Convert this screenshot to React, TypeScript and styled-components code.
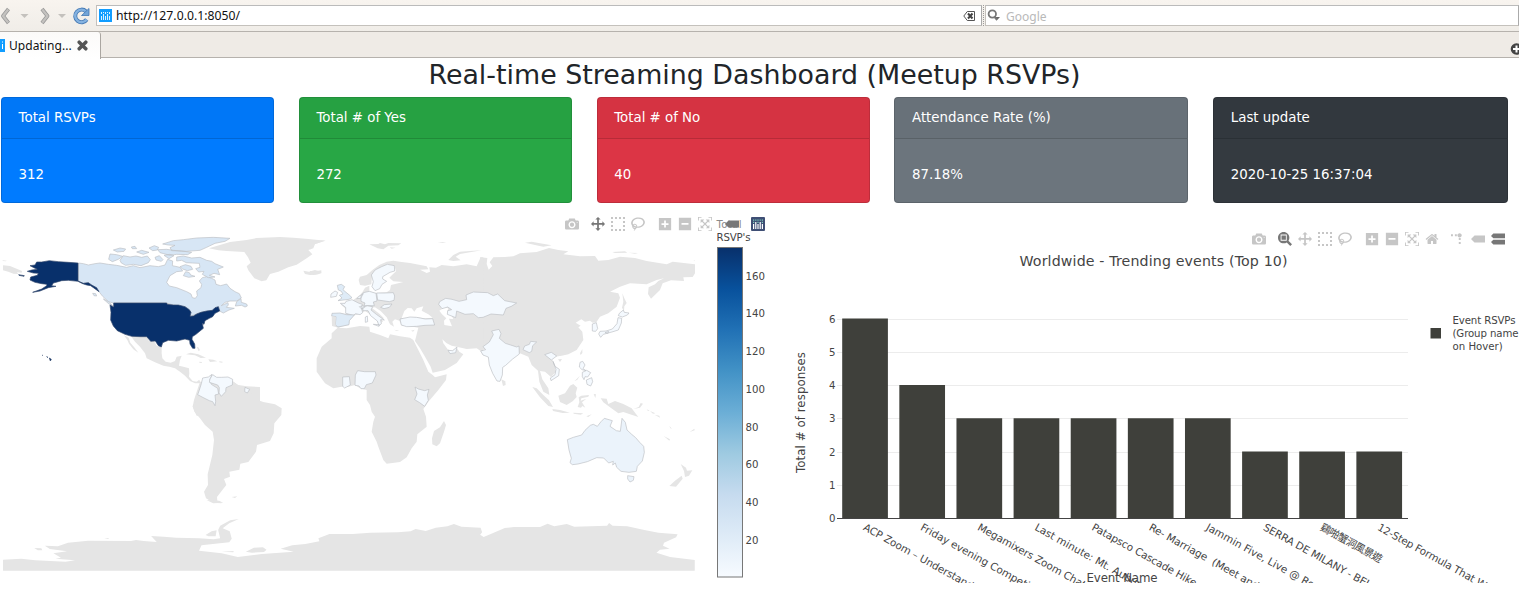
import React from "react";
import styled, { createGlobalStyle } from "styled-components";

const GlobalStyle = createGlobalStyle`
  * { box-sizing: border-box; }
  body { margin: 0; background: #fff; overflow: hidden; font-family: "DejaVu Sans", "Noto Sans CJK TC", sans-serif; }
`;

const Page = styled.div`
  width: 1525px;
  height: 595px;
  overflow: hidden;
  display: flex;
  flex-direction: column;
`;

/* ---------- browser chrome ---------- */
const Chrome = styled.div`
  width: 1519px;
  font-family: "Noto Sans", sans-serif;
  font-size: 12px;
  color: #111;
`;
const NavBar = styled.div`
  height: 32px;
  padding-top: 5px;
  display: flex;
  background: linear-gradient(#f8f4ef, #f0ede8);
  border-bottom: 1px solid #b6b2ad;
`;
const NavIcons = styled.svg`
  width: 96px;
  height: 22px;
  flex: none;
`;
const Field = styled.div<{ $w: number }>`
  width: ${(p) => p.$w}px;
  height: 21px;
  flex: none;
  display: flex;
  align-items: center;
  background: #fff;
  border: 1px solid #c4c1bc;
  border-right-color: #aaa;
  border-top-color: #bbb;
`;
const Url = styled.span`
  margin-left: 4px;
  flex: 1;
  font-size: 12.2px;
  line-height: 20px;
  padding-top: 1px;
  letter-spacing: 0.03px;
`;
const Grip = styled.div`
  width: 2px;
  height: 21px;
  border-left: 1px dotted #999;
  margin-left: 1px;
`;
const Placeholder = styled.span`
  color: #b9b9b9;
  margin-left: 4px;
  padding-top: 1px;
`;
const TabBar = styled.div`
  height: 26px;
  display: flex;
  justify-content: space-between;
  background: #efebe6;
  border-bottom: 1px solid #b6b2ad;
`;
const Tab = styled.div`
  width: 101px;
  height: 27px;
  display: flex;
  align-items: center;
  background: linear-gradient(#fbfaf9, #fff);
  border-right: 1px solid #aaa6a1;
  border-radius: 0 3px 0 0;
`;
const TabLabel = styled.span`
  margin: 0 5px 0 3px;
  font-size: 12px;
  letter-spacing: 0.05px;
`;
const NewTab = styled.svg`
  width: 9px;
  height: 12px;
  margin-top: 11px;
`;

/* ---------- dashboard ---------- */
const Title = styled.h1`
  margin: 0;
  width: 1509px;
  height: 39px;
  line-height: 34px;
  text-align: center;
  font-size: 26.85px;
  font-weight: 400;
  color: #212529;
  white-space: nowrap;
`;
const Cards = styled.div`
  display: grid;
  grid-template-columns: 273px 273px 273px 294px 295px;
  grid-template-rows: 106px;
  column-gap: 24.8px;
  padding-left: 1px;
  height: 106px;
  flex: none;
`;
const Card = styled.section<{ $bg: string }>`
  background: ${(p) => p.$bg};
  border: 1px solid rgba(0, 0, 0, 0.14);
  border-radius: 4px;
  color: #fff;
  font-size: 13.35px;
`;
const CardHead = styled.header`
  height: 41px;
  padding: 0 16.6px;
  line-height: 39px;
  background: rgba(0, 0, 0, 0.03);
  border-bottom: 1px solid rgba(0, 0, 0, 0.14);
`;
const CardBody = styled.div`
  padding: 0 16.6px;
  height: 63px;
  line-height: 72px;
`;
const Charts = styled.div`
  display: flex;
  height: 392px;
  flex: none;
`;
const Panel = styled.div<{ $w: number }>`
  width: ${(p) => p.$w}px;
  height: 392px;
  position: relative;
  flex: none;
`;
const Plot = styled.svg`
  display: block;
  font-family: "DejaVu Sans", "Noto Sans CJK TC", sans-serif;
`;
const ModeBar = styled.div<{ $left: number; $top: number }>`
  position: absolute;
  left: ${(p) => p.$left}px;
  top: ${(p) => p.$top}px;
  display: flex;
`;
const Tool = styled.svg<{ $on?: boolean; $gap?: number }>`
  width: 14px;
  height: 14px;
  margin-right: ${(p) => p.$gap ?? 6}px;
  fill: ${(p) => (p.$on ? "#777" : "#c6c6c6")};
`;

type IconDef = { w: number; d: string; k?: number };
const icons: Record<string, IconDef> = {
  camera: { w: 1000, d: "m500 450c-83 0-150-67-150-150 0-83 67-150 150-150 83 0 150 67 150 150 0 83-67 150-150 150z m400 150h-120c-16 0-34 13-39 29l-31 93c-6 15-23 28-40 28h-340c-16 0-34-13-39-28l-31-94c-6-15-23-28-40-28h-120c-55 0-100-45-100-100v-450c0-55 45-100 100-100h800c55 0 100 45 100 100v450c0 55-45 100-100 100z m-400-550c-138 0-250 112-250 250 0 138 112 250 250 250 138 0 250-112 250-250 0-138-112-250-250-250z m365 380c-19 0-35 16-35 35 0 19 16 35 35 35 19 0 35-16 35-35 0-19-16-35-35-35z" },
  zoom: { w: 1000, d: "m1000-25l-250 251c40 63 63 138 63 218 0 224-182 406-407 406-224 0-406-182-406-406s183-406 407-406c80 0 155 22 218 62l250-250 125 125z m-812 250l0 438 437 0 0-438-437 0z m62 375l313 0 0-312-313 0 0 312z" },
  pan: { w: 1000, d: "m1000 350l-187 188 0-125-250 0 0 250 125 0-188 187-187-187 125 0 0-250-250 0 0 125-188-188 186-187 0 125 252 0 0-250-125 0 187-188 188 188-125 0 0 250 250 0 0-126 187 188z" },
  select: { w: 1000, d: "m0 850l0-143 143 0 0 143-143 0z m286 0l0-143 143 0 0 143-143 0z m285 0l0-143 143 0 0 143-143 0z m286 0l0-143 143 0 0 143-143 0z m-857-286l0-143 143 0 0 143-143 0z m857 0l0-143 143 0 0 143-143 0z m-857-285l0-143 143 0 0 143-143 0z m857 0l0-143 143 0 0 143-143 0z m-857-286l0-143 143 0 0 143-143 0z m286 0l0-143 143 0 0 143-143 0z m285 0l0-143 143 0 0 143-143 0z m286 0l0-143 143 0 0 143-143 0z" },
  lasso: { w: 1031, d: "m1018 538c-36 207-290 336-568 286-277-48-473-256-436-463 10-57 36-108 76-151-13-66 11-137 68-183 34-28 75-41 114-42l-55-70 0 0c-2-1-3-2-4-3-10-14-8-34 5-45 14-11 34-8 45 4 1 1 2 3 2 5l0 0 113 140c16 11 31 24 45 40 4 3 6 7 8 11 48-3 100 0 151 9 278 48 473 255 436 462z m-624-379c-80 14-149 48-197 96 42 42 109 47 156 9 33-26 47-66 41-105z m-187-74c-19 16-33 37-39 60 50-32 109-55 174-68-42-25-95-24-135 8z m360 75c-34-7-69-9-102-8 8 62-16 128-68 170-73 59-175 54-244-5-9 20-16 40-20 61-28 159 121 317 333 354s407-60 434-217c28-159-121-318-333-355z" },
  plus: { w: 875, d: "m1 787l0-875 875 0 0 875-875 0z m687-500l-187 0 0-187-125 0 0 187-188 0 0 125 188 0 0 187 125 0 0-187 187 0 0-125z" },
  minus: { w: 875, d: "m0 788l0-876 875 0 0 876-875 0z m688-500l-500 0 0 125 500 0 0-125z" },
  autoscale: { w: 1000, d: "m250 850l-187 0-63 0 0-62 0-188 63 0 0 188 187 0 0 62z m688 0l-188 0 0-62 188 0 0-188 62 0 0 188 0 62-62 0z m-875-938l0 188-63 0 0-188 0-62 63 0 187 0 0 62-187 0z m875 188l0-188-188 0 0-62 188 0 62 0 0 62 0 188-62 0z m-125 188l-1 0-93-94-156 156 156 156 92-93 2 0 0 250-250 0 0-2 93-92-156-156-156 156 94 92 0 2-250 0 0-250 0 0 93 93 157-156-157-156-93 94 0 0 0-250 250 0 0 0-94 93 156 157 156-157-93-93 0 0 250 0 0 250z" },
  home: { w: 928, d: "m786 296v-267q0-15-11-26t-25-10h-214v214h-143v-214h-214q-15 0-25 10t-11 26v267q0 1 0 2t0 2l321 264 321-264q1-1 1-4z m124 39l-34-41q-5-5-12-6h-2q-7 0-12 3l-386 322-386-322q-7-4-13-4-7 2-12 7l-35 41q-4 5-3 13t6 12l401 334q18 15 42 15t43-15l136-114v109q0 8 5 13t13 5h107q8 0 13-5t5-13v-227l122-102q5-5 6-12t-4-13z" },
  spike: { w: 1000, k: 1.5, d: "M512 409c0-57-46-104-103-104-57 0-104 47-104 104 0 57 47 103 104 103 57 0 103-46 103-103z m-327-39l92 0 0 92-92 0z m-185 0l92 0 0 92-92 0z m370-186l92 0 0 93-92 0z m0-184l92 0 0 92-92 0z" },
  closest: { w: 1500, d: "m375 725l0 0-375-375 375-374 0-1 1125 0 0 750-1125 0z" },
  compare: { w: 1125, d: "m187 786l0 2-187-188 188-187 0 0 937 0 0 373-938 0z m0-499l0 1-187-188 188-188 0 0 937 0 0 376-938-1z" },
};
const ToolIcon = ({ name, on, gap }: { name: string; on?: boolean; gap?: number }) => {
  const { w, d, k = 1 } = icons[name];
  return (
    <Tool $on={on} $gap={gap} viewBox={`0 0 ${w} 1000`}>
      <path d={d} transform={`matrix(${k} 0 0 ${-k} 0 850)`} />
    </Tool>
  );
};

/* ---------- world map ---------- */
const LAND = "#e5e5e5";
const CANADA = "#d7e6f5";
const PALE = "#f4f9fe";
const MID = "#deebf7";
const USA = "#08306b";

type Shape = { d: string; fill?: string };
type Sheet = { x: number; y: number; kx: number; ky: number; shapes: Shape[] };

const T = 1 / 3;
const sheets: Sheet[] = [
  {
    x: 0, y: 225, kx: T, ky: T,
    shapes: [
      { d: "M8,106L20,107 18,109 8,108ZM9,121L30,123 50,131 66,138 65,143 50,142 55,147 40,146 25,140 9,136Z" },
      { d: "M372,331L386,338 391,353 402,366 415,383 400,373 387,356 382,345ZM393,334L440,336 447,348 462,348 470,362 485,367 485,385 487,400 497,410 512,413 525,408 530,395 545,392 540,405 537,422 550,425 567,430 568,445 567,455 578,468 590,470 598,464 602,475 585,475 570,468 555,452 540,440 525,430 508,425 490,422 465,412 440,400 435,385 420,365 405,350Z" },
      { d: "M558,388L572,383 595,388 618,398 602,399 585,391ZM625,403L640,404 652,409 630,411ZM598,410L606,411 605,414 598,413ZM658,409L668,410 667,413 658,412ZM590,365L595,367 600,375 596,379Z" },
      { d: "M582,525L600,470 700,470 715,480 740,484 780,486 780,572 590,572 578,545Z" },
      { fill: CANADA, d: "M235,114L250,116 265,120 285,116 300,114 325,118 350,121 380,127 400,122 420,128 450,122 475,125 495,120 503,103 518,108 517,122 540,127 548,138 530,140 510,152 500,172 508,183 530,188 560,200 573,207 577,218 586,220 592,212 590,198 603,188 605,178 598,168 607,158 620,155 635,160 645,165 648,178 662,182 680,177 690,190 705,200 718,206 724,219 710,228 690,228 675,232 664,242 684,233 685,240 679,247 703,250 687,255 670,264 660,259 656,245 637,256 603,262 571,274 573,262 555,245 520,240 500,234 341,234 325,230 308,214 297,200 285,188 265,173 250,175 234,168Z" },
      { fill: CANADA, d: "M706,243L710,230 723,221 724,232 740,237 742,243 735,246 725,241ZM310,222L325,230 338,242 328,238ZM278,205L287,206 290,213 282,212ZM326,103L330,87 350,89 368,94 355,103 337,110ZM340,75L360,69 377,72 372,79 352,81ZM360,106L370,92 390,96 408,93 425,97 442,93 451,104 445,113 423,122 400,118 377,121 364,114ZM394,66L405,64 410,71 397,71ZM410,81L425,76 447,82 430,88ZM447,69L463,62 476,67 472,75 458,77ZM473,74L500,73 520,76 545,78 575,82 563,89 530,88 510,91 480,83ZM465,97L478,92 489,104 484,109 468,105ZM492,91L510,88 522,92 507,101ZM488,57L520,47 550,44 590,39 640,37 690,40 675,49 645,55 620,67 600,76 560,79 515,77 510,68 525,61 505,60ZM530,96L550,93 575,99 600,97 620,106 635,109 645,116 670,126 653,133 659,149 642,145 628,151 645,156 625,158 607,148 612,139 596,141 587,131 600,127 598,115 577,114 559,113 545,106 530,108ZM550,152L557,140 568,143 572,150 585,154 566,157ZM540,125L556,119 573,124 578,133 562,137 548,132Z" },
      { fill: USA, d: "M234,114L205,112 175,110 148,107 125,111 110,111 105,120 90,122 105,130 112,133 95,135 82,139 100,144 115,145 112,151 92,156 90,165 105,172 125,176 140,178 140,182 125,192 98,202 120,198 145,188 168,184 155,182 160,174 175,170 185,167 205,166 234,169 248,176 260,180 272,182 297,200 290,188 275,180 265,173 250,175 234,168ZM56,149L73,152 72,154 57,151Z" },
      { fill: USA, d: "M341,234L500,234 502,238 520,240 535,240 555,245 568,254 573,262 570,274 580,273 590,267 603,262 620,258 637,256 645,248 655,245 659,258 645,265 638,275 628,280 615,287 612,298 607,295 610,310 600,318 588,328 577,335 576,343 584,357 585,370 578,370 570,357 569,346 555,342 530,348 505,346 488,353 484,366 475,362 466,348 452,349 440,335 420,335 395,334 375,328 352,317 340,303 332,285 333,262 330,240 341,246Z" },
      { fill: USA, d: "M148,399L154,403 151,408ZM140,395L144,397 142,397ZM126,390L128,391 127,391Z" },
    ],
  },
  {
    x: 180, y: 225, kx: T, ky: T,
    shapes: [
      { d: "M87,70L150,51 200,45 230,39 300,36 340,38 385,42 437,47 405,57 400,70 385,75 397,88 380,100 350,119 325,127 295,140 270,147 259,166 245,169 223,160 205,136 200,124 212,113 204,97 193,81 140,78 115,76Z" },
      { d: "M370,137L387,140 405,135 425,141 415,148 390,150 375,147Z" },
      { d: "M57,510L50,525 38,543 43,560 60,580 75,600 98,620 102,645 97,690 83,748 84,780 72,800 78,820 100,833 125,835 112,827 111,816 130,791 139,780 132,762 150,755 148,740 178,734 181,716 205,711 228,680 231,660 270,648 281,625 283,595 304,570 305,550 285,538 250,531 215,519 216,505 210,490 200,485 175,482 157,467 140,460 90,470ZM155,816L172,814 165,819Z" },
      { fill: PALE, d: "M96,448L85,456 68,459 64,476 58,495 53,509 72,519 88,527 98,530 105,542 107,529 105,510 116,507 113,490 94,478 89,465Z" },
      { fill: PALE, d: "M90,462L88,472 113,480 118,488 117,504 124,514 137,500 138,488 157,480 158,463 144,456 125,457 110,457 98,449Z" },
      { fill: PALE, d: "M195,487L209,493 202,504 194,500Z" },
    ],
  },
  {
    x: 480, y: 225, kx: T, ky: T,
    shapes: [
      { d: "M0,97L22,99 20,117 26,134 37,123 29,112 40,97 75,96 100,94 120,85 170,81 207,69 235,75 265,79 250,88 300,94 345,93 355,107 385,105 420,95 465,99 500,108 560,118 578,110 645,118 645,145 638,156 610,157 612,168 573,166 548,175 540,195 513,221 504,207 506,187 525,178 535,168 552,160 530,165 500,178 450,175 420,185 390,200 415,205 420,218 410,245 385,265 360,275 349,292 338,293 330,287 315,290 304,283 287,293 302,302 295,307 307,320 310,345 290,375 265,388 245,392 225,395 215,400 222,415 228,440 213,456 195,440 180,438 187,463 205,490 208,510 190,500 178,470 174,437 155,420 145,395 120,385 0,372Z" },
      { d: "M135,53L155,50 180,55 215,61 190,65 165,60ZM397,81L435,79 442,83 405,84ZM446,83L474,84 465,86ZM641,106L645,107 643,109ZM427,205L433,220 440,234 433,244 432,258 426,248 430,230ZM64,463L76,469 77,480 69,483ZM234,403L246,402 240,411ZM300,385L307,372 307,384 302,390ZM157,486L170,490 190,510 207,526 219,546 205,543 180,517ZM217,552L240,555 270,563 248,564 219,558ZM280,563L310,565 302,569 281,566ZM319,574L335,568 325,576ZM235,512L255,505 270,482 280,477 292,488 287,505 290,516 278,529 260,540 240,531ZM296,517L304,512 327,510 325,515 304,520 302,527 319,521 306,532 316,548 307,543 303,548 293,546 298,532ZM341,507L348,508 346,519ZM362,520L380,521 385,537 405,528 430,537 455,550 464,562 475,576 450,568 430,561 415,565 388,545 370,532ZM460,552L480,548 489,536 482,534 476,546ZM500,553L509,557 504,558ZM510,558L526,565 519,566ZM524,569L538,572 540,578ZM551,633L570,643 568,647ZM568,603L576,611 571,610ZM629,621L643,611 644,616ZM283,469L300,452 292,464ZM602,717L618,728 621,737 637,736 627,752 615,756 612,738ZM605,752L608,761 588,785 568,783 585,767Z" },
      { fill: PALE, d: "M134,363L148,358 152,349 170,351 158,362 155,379 148,383 129,374ZM194,389L214,382 230,393 214,405ZM219,409L225,424 238,433 236,452 213,467 211,459 225,449 228,433ZM337,297L349,293 353,311 347,319 337,318ZM418,265L430,255 433,262 447,264 442,270 427,276 415,272ZM414,278L425,280 424,294 415,315 399,320 370,328 362,337 356,327 360,319 378,318 397,312 411,296ZM300,412L308,409 315,420 309,431 318,437 306,434 298,426ZM307,442L320,436 332,443 323,456 315,455 312,464 307,455ZM319,465L335,458 338,470 332,483 321,478ZM375,323L386,319 384,325Z" },
      { fill: "#ebf3fb", d: "M262,644L280,637 305,630 315,616 331,601 340,598 352,604 363,590 373,580 397,587 390,604 409,617 421,619 426,580 436,592 441,615 455,628 467,638 479,652 491,664 493,682 487,708 472,724 469,739 447,742 423,739 410,727 406,714 398,720 400,709 386,714 371,699 350,698 322,710 294,717 277,719 270,713 274,700 267,675Z" },
      { fill: "#ebf3fb", d: "M443,752L462,755 460,766 450,771 443,762Z" },
    ],
  },
  {
    x: 310, y: 225, kx: T, ky: T,
    shapes: [
      { d: "M0,48L45,46 25,54 5,61 0,75ZM178,58L205,57 210,54 225,58 235,54 274,55 265,61 235,62 220,73 203,70ZM239,67L257,68 245,71ZM383,52L409,51 398,54ZM415,105L430,90 450,80 490,77 515,76 480,82 450,87 437,95 452,106 430,108Z" },
      { d: "M146,165L150,155 170,150 190,133 208,120 230,110 250,107 275,111 300,114 350,124 355,133 330,134 350,144 360,140 358,127 378,128 395,120 430,124 470,118 500,124 512,97 520,97 520,392 512,378 500,370 470,372 440,365 425,362 410,355 397,343 400,355 413,373 425,378 440,368 448,380 460,388 440,414 405,435 368,443 362,425 345,395 330,370 315,348 325,308 300,304 275,302 268,287 255,283 247,290 252,305 240,298 230,277 212,258 195,247 185,248 208,266 222,280 214,284 214,298 207,301 200,285 180,268 165,258 150,268 133,271 118,287 117,300 100,304 85,308 66,303 66,268 90,264 110,268 107,252 92,238 115,230 130,225 150,210 158,200 165,188 178,182 178,198 195,204 230,202 240,195 243,180 280,171 250,169 238,158 250,146 258,139 253,122 232,118 215,127 195,135 186,152 184,178 165,182 150,180Z" },
      { d: "M83,308L110,310 150,303 178,305 180,320 210,330 235,340 240,328 270,334 300,338 310,345 325,375 340,405 355,440 368,450 375,457 410,448 408,465 385,495 355,530 340,552 348,575 350,605 322,628 320,650 305,670 290,697 270,711 230,716 220,705 205,665 200,650 185,620 190,590 195,575 185,560 180,540 170,525 170,495 150,490 135,480 115,485 95,485 70,490 45,475 20,440 20,400 35,365 65,340 65,325Z" },
      { d: "M402,588L408,600 402,620 390,655 380,664 367,658 366,640 372,618 390,607ZM0,138L15,139 34,136 34,145 12,150 0,149ZM208,288L215,284 220,292ZM252,314L268,317 260,318ZM303,317L314,314 309,320Z" },
      { fill: "#fff", d: "M275,279L283,258 293,249 305,250 313,260 320,250 340,244 335,257 355,268 368,278 345,280 315,276 285,283ZM388,257L405,247 414,250 413,262 425,272 430,282 417,281 426,304 403,300 402,287 409,280 396,268Z" },
      { fill: MID, d: "M82,181L94,178 104,185 99,194 108,202 118,210 126,218 117,223 84,227 96,219 88,211 99,207 93,198 85,195Z" },
      { fill: PALE, d: "M63,207L75,198 83,202 79,214 62,217ZM91,235L105,235 108,229 126,224 145,234 157,238 154,248 158,263 150,269 137,266 130,271 107,265 107,247ZM147,214L160,206 152,220 140,221ZM153,213L160,203 178,199 198,205 201,228 190,231 193,242 162,242 165,234 153,229ZM200,204L225,204 250,203 254,213 252,226 238,230 203,225ZM184,150L195,135 215,125 232,118 253,122 254,138 240,142 218,155 218,162 230,169 216,178 209,191 195,197 186,185 190,170ZM158,247L172,242 188,245 183,255 199,268 223,285 212,284 214,296 207,302 202,288 182,272 174,257 159,257ZM190,298L208,299 207,304ZM166,276L172,273 173,290 166,292ZM212,247L223,239 246,237 238,247 222,251ZM148,245L160,242 164,247 155,252Z" },
      { fill: MID, d: "M66,265L90,264 110,269 133,270 118,287 117,299 99,303 83,306 76,299 78,275 65,273Z" },
      { fill: LAND, d: "M65,273L78,275 76,303 66,303Z" },
      { fill: PALE, d: "M270,282L300,276 320,277 346,282 368,281 374,300 345,301 320,304 290,305 274,300ZM386,238L389,230 407,220 426,223 447,229 470,224 468,210 490,201 533,203 550,212 563,207 584,227 620,234 604,244 588,250 580,270 543,267 519,277 505,278 490,266 465,268 440,258 437,278 412,268 413,257 425,254 413,246 396,251Z" },
      { fill: PALE, d: "M545,318L567,313 573,326 568,340 586,355 602,360 620,366 627,363 628,387 608,402 587,421 578,427 577,450 570,469 561,468 548,445 538,420 535,396 519,390 512,378 527,374 519,365 538,351 550,329Z" },
      { fill: PALE, d: "M98,456L118,455 121,480 104,489 98,484ZM136,450L143,437 164,440 196,440 198,450 187,474 169,479 163,491 153,491 147,483 135,481ZM315,486L325,492 344,497 357,493 352,510 355,526 344,544 329,533 314,524 321,507ZM414,376L428,377 441,366 437,383 420,386Z" },
    ],
  },
  {
    x: 0, y: 500, kx: 0.5038, ky: T,
    shapes: [
      { d: "M6,179L42,176 70,181 130,185 149,181 110,176 121,173 106,160 133,154 99,147 89,137 115,139 135,128 175,122 260,123 270,120 285,123 311,126 300,108 325,110 350,113 395,115 424,118 437,115 433,90 437,77 457,61 474,57 455,70 442,85 456,94 460,116 455,127 427,131 400,136 395,152 440,160 472,171 520,162 583,155 557,146 580,136 606,132 634,124 632,115 654,102 700,102 735,98 790,97 815,94 825,87 845,93 865,83 888,79 901,72 916,80 954,83 957,97 953,104 960,111 980,98 1002,84 1020,81 1072,81 1087,71 1100,79 1125,72 1140,80 1205,77 1209,69 1216,77 1245,79 1279,90 1307,98 1345,103 1342,112 1318,128 1316,137 1329,146 1310,149 1303,158 1330,171 1379,180 1379,212 6,212Z" },
      { d: "M68,144L82,145 84,151 75,151ZM207,114L216,114 215,117ZM408,105L420,94 430,91 428,109 414,109ZM488,155L504,143 522,142 529,149 524,156 500,158ZM440,155L464,153 463,157ZM410,0L435,2 443,8 423,10Z" },
    ],
  },
];

const outline = (fill?: string) => {
  if (!fill || fill === "#fff" || fill === LAND) return "none";
  return fill === USA ? "#33486c" : "#bcc0c4";
};

const WorldMap = () => (
  <Plot width="790" height="392" viewBox="0 203 790 392">
    <defs>
      <linearGradient id="blues" x1="0" y1="0" x2="0" y2="1">
        <stop offset="0" stopColor="#08306b" />
        <stop offset="0.125" stopColor="#08519c" />
        <stop offset="0.25" stopColor="#2171b5" />
        <stop offset="0.375" stopColor="#4292c6" />
        <stop offset="0.5" stopColor="#6baed6" />
        <stop offset="0.625" stopColor="#9ecae1" />
        <stop offset="0.75" stopColor="#c6dbef" />
        <stop offset="0.875" stopColor="#deebf7" />
        <stop offset="1" stopColor="#f7fbff" />
      </linearGradient>
    </defs>
    {sheets.map((s, i) => (
      <g key={i} transform={`translate(${s.x} ${s.y}) scale(${s.kx} ${s.ky})`} strokeLinejoin="round">
        {s.shapes.map((p, j) => (
          <path key={j} d={p.d} fill={p.fill ?? LAND} stroke={outline(p.fill)} strokeWidth={2} />
        ))}
      </g>
    ))}
    <g fill="#444" fontSize="10.2">
      <text x="716.5" y="228" fill="#8a8a8a" textLength="25">Total</text>
      <text x="716.5" y="241" textLength="34">RSVP's</text>
      <rect x="717.5" y="247.5" width="25" height="329.5" fill="url(#blues)" stroke="#777" />
      {[160, 140, 120, 100, 80, 60, 40, 20].map((v, i) => (
        <text key={v} x="745.5" y={279.7 + i * 37.75}>{v}</text>
      ))}
    </g>
  </Plot>
);

const Logo = () => (
  <Tool viewBox="0 0 14 14" $gap={0}>
    <rect width="14" height="14" rx="1" fill="#3f4f75" />
    <g fill="#fff">
      <rect x="2" y="7" width="1.2" height="5" /><rect x="4.2" y="5" width="1.2" height="7" /><rect x="6.4" y="7" width="1.2" height="5" />
      <rect x="8.6" y="5" width="1.2" height="7" /><rect x="10.8" y="7" width="1.2" height="5" />
    </g>
    <g fill="#80cfbe">
      <rect x="2" y="2.5" width="1.2" height="1.2" /><rect x="2" y="4.8" width="1.2" height="1.2" /><rect x="4.2" y="2.5" width="1.2" height="1.2" /><rect x="6.4" y="4.8" width="1.2" height="1.2" />
      <rect x="6.4" y="2.5" width="1.2" height="1.2" /><rect x="8.6" y="2.5" width="1.2" height="1.2" /><rect x="10.8" y="2.5" width="1.2" height="1.2" /><rect x="10.8" y="4.8" width="1.2" height="1.2" />
    </g>
  </Tool>
);

/* ---------- bar chart ---------- */
const events: { name: string; n: number; len: number }[] = [
  { name: "ACP Zoom – Understand", n: 6, len: 124 },
  { name: "Friday evening Competi", n: 4, len: 123 },
  { name: "Megamixers Zoom Chat", n: 3, len: 122 },
  { name: "Last minute: Mt. Aubur", n: 3, len: 120 },
  { name: "Patapsco Cascade Hike -", n: 3, len: 125 },
  { name: "Re- Marriage  (Meet and", n: 3, len: 124 },
  { name: "Jammin Five, Live @ Ro", n: 3, len: 122 },
  { name: "SERRA DE MILANY - BEL", n: 2, len: 122 },
  { name: "鷄啪蟹洞風景遊", n: 2, len: 69 },
  { name: "12-Step Formula That W", n: 2, len: 123 },
];

const BarChart = () => (
  <Plot width="735" height="392" viewBox="790 203 735 392">
    <clipPath id="plotArea"><rect x="790" y="203" width="729" height="380" /></clipPath>
    <g clipPath="url(#plotArea)" fill="#444">
      <text x="1153.5" y="266" textAnchor="middle" fontSize="14.2" textLength="268">Worldwide - Trending events (Top 10)</text>
      {[1, 2, 3, 4, 5, 6].map((v) => (
        <rect key={v} x="837" y={Math.round(518 - v * 33.25)} width="571" height="1" fill="#ececec" />
      ))}
      {[0, 1, 2, 3, 4, 5, 6].map((v) => (
        <text key={v} x="835.5" y={522 - v * 33.25} textAnchor="end" fontSize="10.2">{v}</text>
      ))}
      {events.map((e, i) => (
        <rect key={e.name} x={842.2 + i * 57.13} y={518 - e.n * 33.25} width="45.7" height={e.n * 33.25} fill="#3f403b" />
      ))}
      <rect x="837" y="518" width="571" height="1" fill="#444" />
      {events.map((e, i) => (
        <text key={e.name} transform={`translate(${862.5 + i * 57.13} 529.5) rotate(29)`} fontSize="10.4" textLength={e.len} style={{ whiteSpace: "pre" }}>{e.name}</text>
      ))}
      <text x="1122" y="581.5" textAnchor="middle" fontSize="11.8" textLength="71">Event Name</text>
      <text transform="translate(805 412.5) rotate(-90)" textAnchor="middle" fontSize="11.8" textLength="121">Total # of responses</text>
      <rect x="1430.500" y="328" width="10.5" height="10.5" fill="#3f403b" />
      <g fontSize="10.2">
        <text x="1452.5" y="324" textLength="63">Event RSVPs</text>
        <text x="1452.5" y="337.3" textLength="66">(Group name</text>
        <text x="1452.5" y="350">on Hover)</text>
      </g>
    </g>
  </Plot>
);

const Favicon = () => (
  <svg width="13" height="13" viewBox="0 0 13 13">
    <rect width="13" height="13" fill="#119dff" />
    <path d="M2.5 7v4M4.5 5v6M6.5 7v4M8.5 5v6M10.5 7v4M2.5 3v2M6.5 3v2M10.5 3v2M4.5 3v1M8.5 3v1" stroke="#d9f0ff" />
  </svg>
);

const stats = [
  { label: "Total RSVPs", value: "312", bg: "#007bff" },
  { label: "Total # of Yes", value: "272", bg: "#28a745" },
  { label: "Total # of No", value: "40", bg: "#dc3545" },
  { label: "Attendance Rate (%)", value: "87.18%", bg: "#6c757d" },
  { label: "Last update", value: "2020-10-25 16:37:04", bg: "#343a40" },
];

export default function App() {
  return (
    <Page>
      <GlobalStyle />
      <Chrome>
        <NavBar>
          <NavIcons viewBox="0 5 96 22">
            <g fill="none" strokeLinejoin="round">
              <path d="M8.500 9L3 16L8.500 23" stroke="#999" strokeWidth="3.8" />
              <path d="M8.200 9.500L3 16L8.200 22.500" stroke="#c4c2bf" strokeWidth="2.2" />
              <path d="M42 9L47.500 16L42 23" stroke="#999" strokeWidth="3.8" />
              <path d="M42.300 9.500L47.500 16L42.300 22.500" stroke="#c4c2bf" strokeWidth="2.2" />
              <path d="M86 11.5A6.3 6.3 0 1 0 86.7 19.5" stroke="#4479b4" strokeWidth="4" />
              <path d="M86 11.5A6.3 6.3 0 1 0 86.7 19.5" stroke="#84b2e0" strokeWidth="2.4" />
            </g>
            <path d="M20.5 14h8l-4 4zM58 14h8l-4 4z" fill="#c4c1bd" />
            <path d="M89 8.5v7h-7.5z" fill="#73a5d8" stroke="#4479b4" strokeWidth=".8" />
          </NavIcons>
          <Field $w={886}>
            <svg width="2" height="13" />
            <Favicon />
            <Url>http://127.0.0.1:8050/</Url>
            <svg width="18" height="12" viewBox="0 0 18 12">
              <path d="M.8 6L4.3 1.5H11.500V10.5H4.3Z" fill="none" stroke="#555" />
              <path d="M5 3.5L9.5 8.5M9.5 3.5L5 8.5" stroke="#444" strokeWidth="2" />
            </svg>
          </Field>
          <Grip />
          <Field $w={534}>
            <svg width="16" height="16" viewBox="0 0 16 16" fill="none">
              <circle cx="6.3" cy="6" r="3.7" stroke="#777" strokeWidth="1.8" />
              <path d="M8.7 9l2.5 3" stroke="#777" strokeWidth="2" />
              <path d="M9.500 9h4.500L11.700 11.5z" fill="#666" />
            </svg>
            <Placeholder>Google</Placeholder>
          </Field>
        </NavBar>
        <TabBar>
          <Tab>
            <svg width="6" height="13" viewBox="0 0 6 13"><rect width="5" height="13" fill="#119dff" /><path d="M2.500 5v5M2.500 2.500v1" stroke="#fff" /></svg>
            <TabLabel>Updating...</TabLabel>
            <svg width="11" height="11" viewBox="0 0 10 10"><path d="M2 2L8 8M8 2L2 8" stroke="#555" strokeWidth="3.2" strokeLinecap="round" /></svg>
          </Tab>
          <NewTab viewBox="0 0 9 12">
            <circle cx="6.500" cy="6" r="5.800" fill="#444" />
            <path d="M3 6h7M6.500 2.500v7" stroke="#fff" strokeWidth="2" />
          </NewTab>
        </TabBar>
      </Chrome>
      <Title>Real-time Streaming Dashboard (Meetup RSVPs)</Title>
      <Cards>
        {stats.map((s) => (
          <Card key={s.label} $bg={s.bg}>
            <CardHead>{s.label}</CardHead>
            <CardBody>{s.value}</CardBody>
          </Card>
        ))}
      </Cards>
      <Charts>
        <Panel $w={790}>
          <WorldMap />
          <ModeBar $left={565} $top={14}>
            <ToolIcon name="camera" gap={12} />
            <ToolIcon name="pan" on />
            <ToolIcon name="select" />
            <ToolIcon name="lasso" gap={13} />
            <ToolIcon name="plus" />
            <ToolIcon name="minus" />
            <ToolIcon name="autoscale" gap={13} />
            <ToolIcon name="closest" on gap={12} />
            <Logo />
          </ModeBar>
        </Panel>
        <Panel $w={735}>
          <BarChart />
          <ModeBar $left={462} $top={29}>
            <ToolIcon name="camera" gap={12} />
            <ToolIcon name="zoom" on />
            <ToolIcon name="pan" />
            <ToolIcon name="select" />
            <ToolIcon name="lasso" gap={13} />
            <ToolIcon name="plus" />
            <ToolIcon name="minus" />
            <ToolIcon name="autoscale" />
            <ToolIcon name="home" gap={12} />
            <ToolIcon name="spike" />
            <ToolIcon name="closest" />
            <ToolIcon name="compare" on />
          </ModeBar>
        </Panel>
      </Charts>
    </Page>
  );
}
